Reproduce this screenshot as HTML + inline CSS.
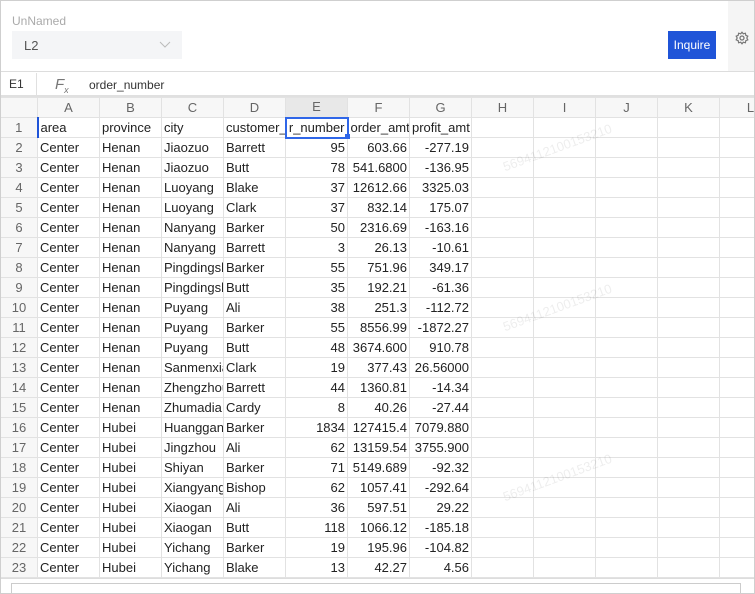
<!DOCTYPE html>
<html><head><meta charset="utf-8"><style>
*{box-sizing:border-box;margin:0;padding:0}
body{width:755px;height:594px;overflow:hidden;background:#fff;font-family:"Liberation Sans",Arial,sans-serif;position:relative}
.frame{position:absolute;left:0;top:0;width:755px;height:594px;border:1px solid #cfcfcf;z-index:5;pointer-events:none}
.top{position:absolute;left:1px;top:1px;width:727px;height:71px;border-bottom:1px solid #ddd}
.side{position:absolute;left:728px;top:1px;width:26px;height:71px;background:#f5f5f5;border-bottom:1px solid #ddd}
.lbl{position:absolute;left:11px;top:13px;font-size:12px;color:#aaa}
.sel{position:absolute;left:11px;top:30px;width:170px;height:28px;background:#f4f5f7}
.sel span{position:absolute;left:12px;top:7px;font-size:13px;color:#555}
.btn{position:absolute;left:667px;top:30px;width:48px;height:28px;background:#1f54d8;color:#fff;font-size:12px;text-align:center;line-height:28px}
.fb{position:absolute;left:1px;top:73px;width:753px;height:24px;border-bottom:2px solid #e0e0e0;font-size:12px;color:#333}
.fb .ref{position:absolute;left:0;top:0;width:36px;height:22px;border-right:1px solid #e0e0e0;line-height:22px;padding-left:8px}
.fb .fx{position:absolute;left:54px;top:3px;font-style:italic;color:#777;font-size:15px}
.fb .v{position:absolute;left:88px;top:5px}
table{position:absolute;left:0;top:97px;width:781px;border-collapse:collapse;table-layout:fixed;font-size:13px;color:#222}
td{height:20px;border:1px solid #e2e2e2;white-space:nowrap;overflow:hidden;padding:0 2px;line-height:18px}
tr.h td{background:#f7f7f7;color:#666;text-align:center;height:20px}
td.n{background:#f7f7f7;color:#666;text-align:center}
td.r{text-align:right}
.sb{position:absolute;left:1px;top:578px;width:753px;height:15px;background:#fff;border-top:1px solid #ddd}
.sb div{position:absolute;left:10px;top:4px;width:730px;height:10px;border:1px solid #ccc;border-bottom:none}
.wm{position:absolute;color:rgba(0,0,0,0.07);font-size:13px;transform:rotate(-20deg);white-space:nowrap}
</style></head><body>
<div class="frame"></div>
<div class="top"><div class="lbl">UnNamed</div><div class="sel"><span>L2</span><svg style="position:absolute;left:147px;top:10px" width="12" height="8"><path d="M1 1 L6 6 L11 1" stroke="#bbb" fill="none"/></svg></div><div class="btn">Inquire</div></div>
<div class="side"><svg style="position:absolute;left:7px;top:30px" width="14" height="14" viewBox="0 0 14 14"><circle cx="7" cy="7" r="2" fill="none" stroke="#777" stroke-width="1.3"/><path d="M7 1.2 L8.3 2.8 L10.4 2.2 L10.8 4.3 L12.8 5.2 L11.8 7 L12.8 8.8 L10.8 9.7 L10.4 11.8 L8.3 11.2 L7 12.8 L5.7 11.2 L3.6 11.8 L3.2 9.7 L1.2 8.8 L2.2 7 L1.2 5.2 L3.2 4.3 L3.6 2.2 L5.7 2.8 Z" fill="none" stroke="#777" stroke-width="1.2"/></svg></div>
<div class="fb"><div class="ref">E1</div><div class="fx">F<sub style="font-size:9px">x</sub></div><div class="v">order_number</div></div>
<table>
<colgroup><col style="width:37px"><col style="width:62px"><col style="width:62px"><col style="width:62px"><col style="width:62px"><col style="width:62px"><col style="width:62px"><col style="width:62px"><col style="width:62px"><col style="width:62px"><col style="width:62px"><col style="width:62px"><col style="width:62px"></colgroup>
<tr class="h"><td></td><td>A</td><td>B</td><td>C</td><td>D</td><td style="background:#e8e8e8">E</td><td>F</td><td>G</td><td>H</td><td>I</td><td>J</td><td>K</td><td>L</td></tr>
<tr><td class="n">1</td><td style="border-left:2px solid #1f54d8">area</td><td>province</td><td>city</td><td>customer_</td><td style="border:2px solid #2f66e8;text-align:right">r_number</td><td style="text-align:right">order_amt</td><td style="text-align:right">profit_amt</td><td></td><td></td><td></td><td></td><td></td></tr>
<tr><td class="n">2</td><td>Center</td><td>Henan</td><td>Jiaozuo</td><td>Barrett</td><td class="r">95</td><td class="r">603.66</td><td class="r">-277.19</td><td></td><td></td><td></td><td></td><td></td></tr>
<tr><td class="n">3</td><td>Center</td><td>Henan</td><td>Jiaozuo</td><td>Butt</td><td class="r">78</td><td class="r">541.6800</td><td class="r">-136.95</td><td></td><td></td><td></td><td></td><td></td></tr>
<tr><td class="n">4</td><td>Center</td><td>Henan</td><td>Luoyang</td><td>Blake</td><td class="r">37</td><td class="r">12612.66</td><td class="r">3325.03</td><td></td><td></td><td></td><td></td><td></td></tr>
<tr><td class="n">5</td><td>Center</td><td>Henan</td><td>Luoyang</td><td>Clark</td><td class="r">37</td><td class="r">832.14</td><td class="r">175.07</td><td></td><td></td><td></td><td></td><td></td></tr>
<tr><td class="n">6</td><td>Center</td><td>Henan</td><td>Nanyang</td><td>Barker</td><td class="r">50</td><td class="r">2316.69</td><td class="r">-163.16</td><td></td><td></td><td></td><td></td><td></td></tr>
<tr><td class="n">7</td><td>Center</td><td>Henan</td><td>Nanyang</td><td>Barrett</td><td class="r">3</td><td class="r">26.13</td><td class="r">-10.61</td><td></td><td></td><td></td><td></td><td></td></tr>
<tr><td class="n">8</td><td>Center</td><td>Henan</td><td>Pingdingsh</td><td>Barker</td><td class="r">55</td><td class="r">751.96</td><td class="r">349.17</td><td></td><td></td><td></td><td></td><td></td></tr>
<tr><td class="n">9</td><td>Center</td><td>Henan</td><td>Pingdingsh</td><td>Butt</td><td class="r">35</td><td class="r">192.21</td><td class="r">-61.36</td><td></td><td></td><td></td><td></td><td></td></tr>
<tr><td class="n">10</td><td>Center</td><td>Henan</td><td>Puyang</td><td>Ali</td><td class="r">38</td><td class="r">251.3</td><td class="r">-112.72</td><td></td><td></td><td></td><td></td><td></td></tr>
<tr><td class="n">11</td><td>Center</td><td>Henan</td><td>Puyang</td><td>Barker</td><td class="r">55</td><td class="r">8556.99</td><td class="r">-1872.27</td><td></td><td></td><td></td><td></td><td></td></tr>
<tr><td class="n">12</td><td>Center</td><td>Henan</td><td>Puyang</td><td>Butt</td><td class="r">48</td><td class="r">3674.600</td><td class="r">910.78</td><td></td><td></td><td></td><td></td><td></td></tr>
<tr><td class="n">13</td><td>Center</td><td>Henan</td><td>Sanmenxia</td><td>Clark</td><td class="r">19</td><td class="r">377.43</td><td class="r">26.56000</td><td></td><td></td><td></td><td></td><td></td></tr>
<tr><td class="n">14</td><td>Center</td><td>Henan</td><td>Zhengzhou</td><td>Barrett</td><td class="r">44</td><td class="r">1360.81</td><td class="r">-14.34</td><td></td><td></td><td></td><td></td><td></td></tr>
<tr><td class="n">15</td><td>Center</td><td>Henan</td><td>Zhumadia</td><td>Cardy</td><td class="r">8</td><td class="r">40.26</td><td class="r">-27.44</td><td></td><td></td><td></td><td></td><td></td></tr>
<tr><td class="n">16</td><td>Center</td><td>Hubei</td><td>Huanggan</td><td>Barker</td><td class="r">1834</td><td class="r">127415.4</td><td class="r">7079.880</td><td></td><td></td><td></td><td></td><td></td></tr>
<tr><td class="n">17</td><td>Center</td><td>Hubei</td><td>Jingzhou</td><td>Ali</td><td class="r">62</td><td class="r">13159.54</td><td class="r">3755.900</td><td></td><td></td><td></td><td></td><td></td></tr>
<tr><td class="n">18</td><td>Center</td><td>Hubei</td><td>Shiyan</td><td>Barker</td><td class="r">71</td><td class="r">5149.689</td><td class="r">-92.32</td><td></td><td></td><td></td><td></td><td></td></tr>
<tr><td class="n">19</td><td>Center</td><td>Hubei</td><td>Xiangyang</td><td>Bishop</td><td class="r">62</td><td class="r">1057.41</td><td class="r">-292.64</td><td></td><td></td><td></td><td></td><td></td></tr>
<tr><td class="n">20</td><td>Center</td><td>Hubei</td><td>Xiaogan</td><td>Ali</td><td class="r">36</td><td class="r">597.51</td><td class="r">29.22</td><td></td><td></td><td></td><td></td><td></td></tr>
<tr><td class="n">21</td><td>Center</td><td>Hubei</td><td>Xiaogan</td><td>Butt</td><td class="r">118</td><td class="r">1066.12</td><td class="r">-185.18</td><td></td><td></td><td></td><td></td><td></td></tr>
<tr><td class="n">22</td><td>Center</td><td>Hubei</td><td>Yichang</td><td>Barker</td><td class="r">19</td><td class="r">195.96</td><td class="r">-104.82</td><td></td><td></td><td></td><td></td><td></td></tr>
<tr><td class="n">23</td><td>Center</td><td>Hubei</td><td>Yichang</td><td>Blake</td><td class="r">13</td><td class="r">42.27</td><td class="r">4.56</td><td></td><td></td><td></td><td></td><td></td></tr>
</table>
<div style="position:absolute;left:345px;top:134px;width:5px;height:5px;background:#2f66e8"></div>
<div class="wm" style="left:500px;top:140px">5694112100153210</div>
<div class="wm" style="left:500px;top:300px">5694112100153210</div>
<div class="wm" style="left:500px;top:470px">5694112100153210</div>
<div class="sb"><div></div></div>
</body></html>
